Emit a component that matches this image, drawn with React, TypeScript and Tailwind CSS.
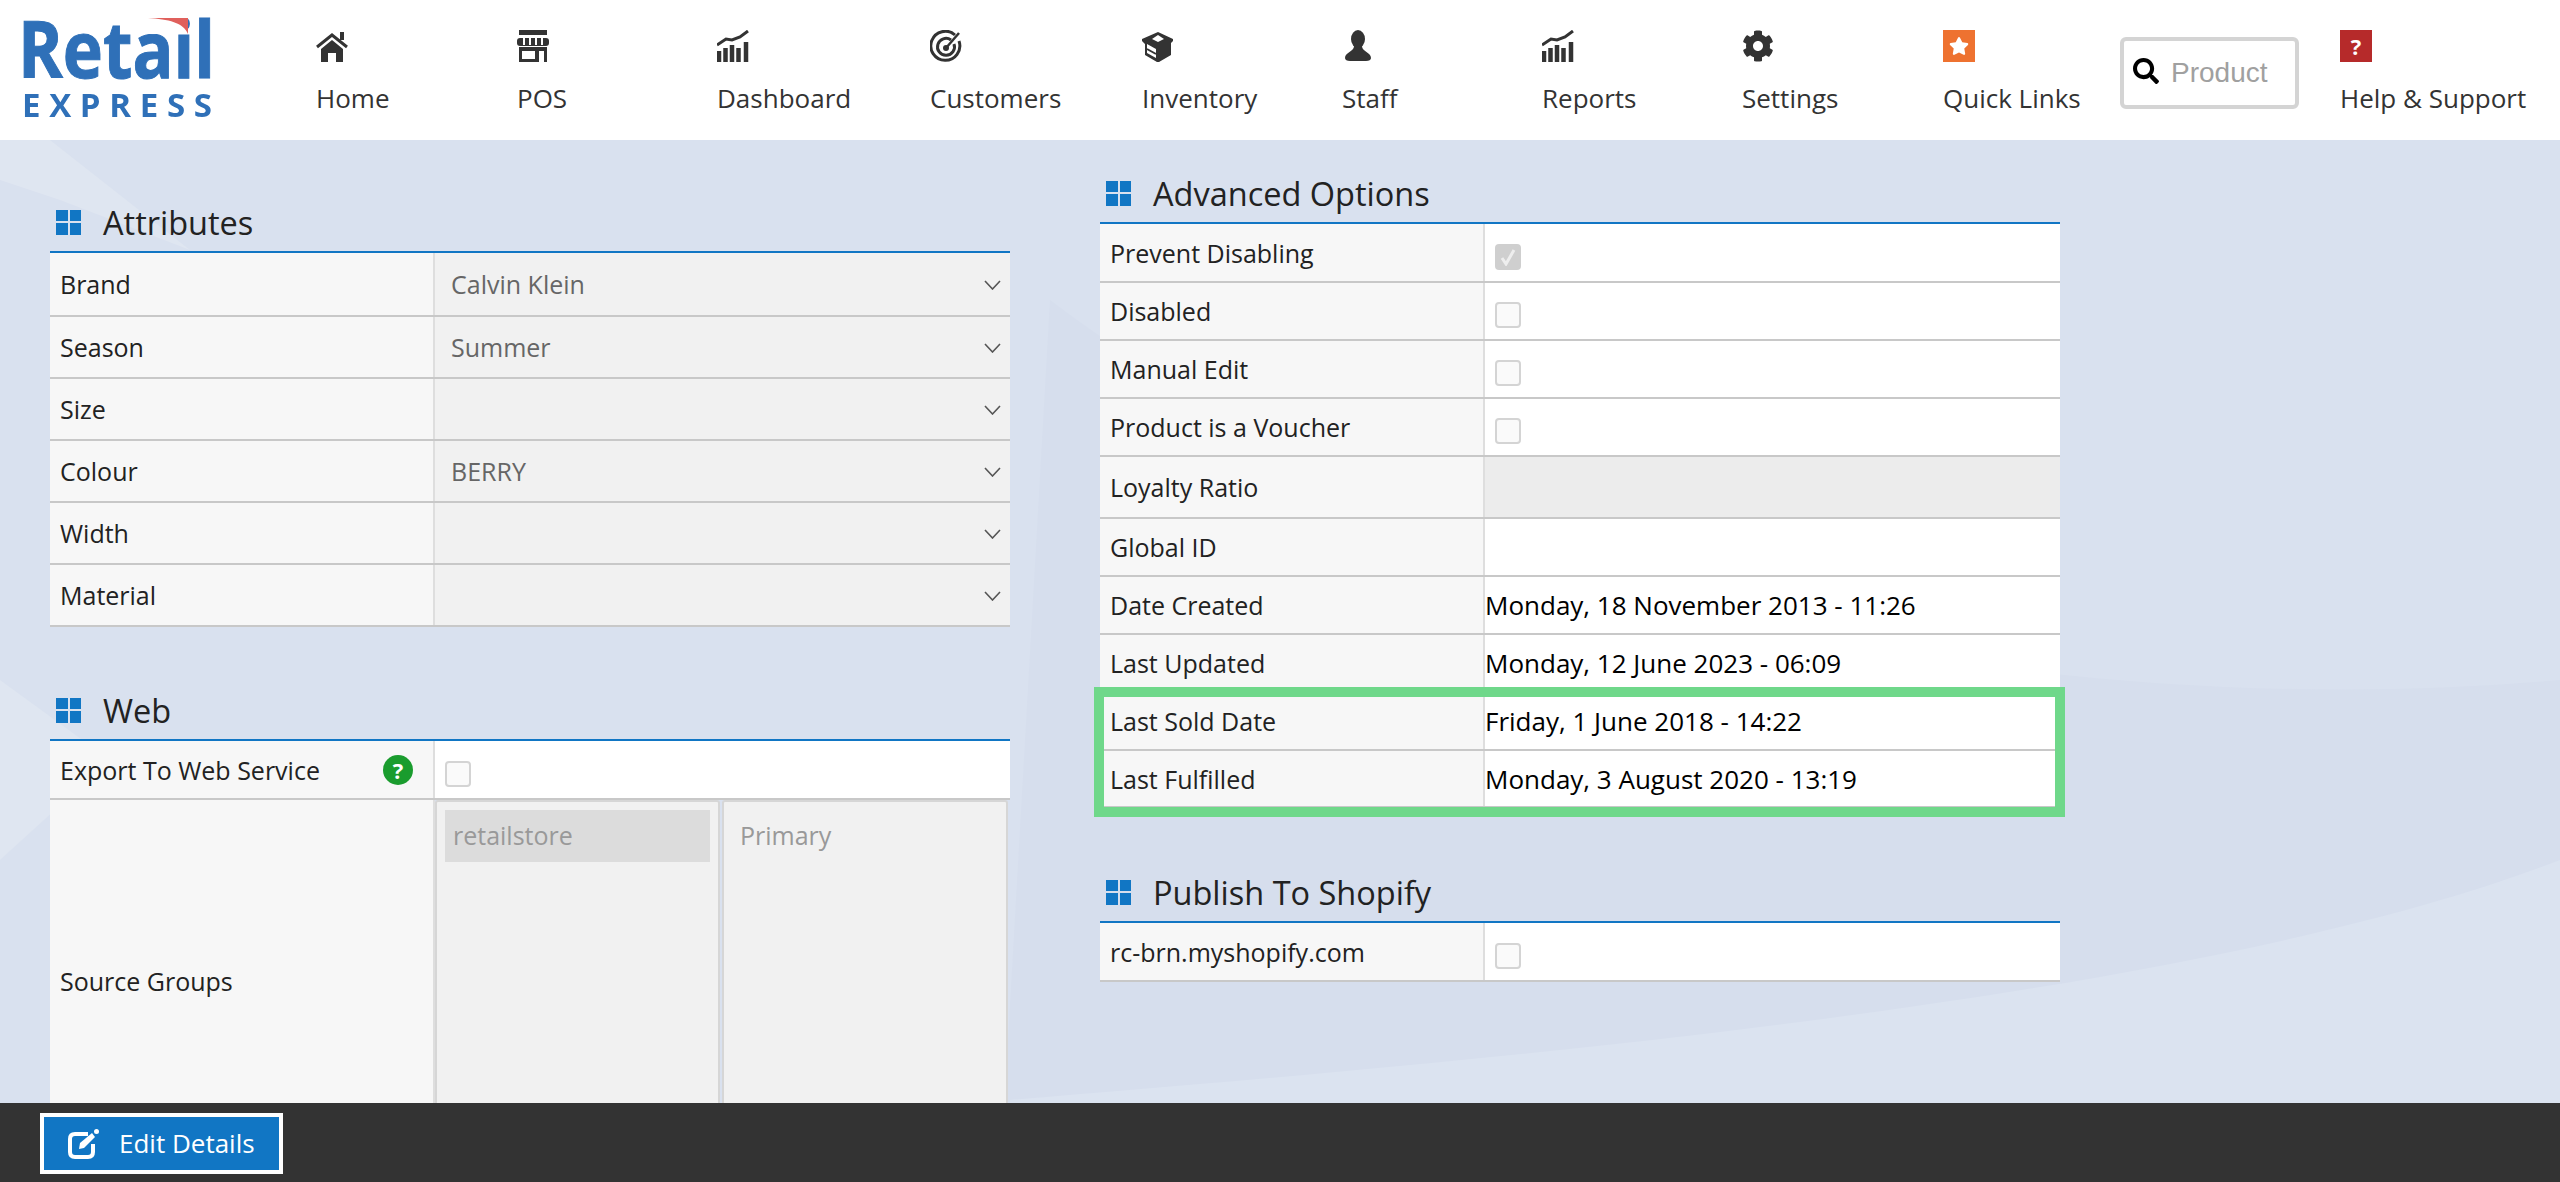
import React from "react";
import { FaCog, FaSearch, FaStar } from "react-icons/fa";

const D = "#333333";

function HomeIcon() {
  return (
    <svg width="32" height="32" viewBox="0 0 32 32">
      <path d="M1 17 L16 5 L31 17" fill="none" stroke={D} strokeWidth="3" />
      <rect x="24" y="2" width="4" height="8" fill={D} />
      <path d="M5 19 L16 10 L27 19 V32 H20 V23 H12 V32 H5 Z" fill={D} />
    </svg>
  );
}
function PosIcon() {
  return (
    <svg width="32" height="32" viewBox="0 0 32 32">
      <rect x="2" y="0" width="28" height="5" fill={D} />
      <rect x="0" y="8" width="32" height="8" rx="3" fill={D} />
      <path d="M7 8V15M13 8V15M19 8V15M25 8V15" stroke="#fff" strokeWidth="2" />
      <path d="M2 17H30V32H2Z" fill={D} />
      <rect x="5" y="21" width="13" height="8" fill="#fff" />
      <rect x="22" y="21" width="5" height="11" fill="#fff" />
    </svg>
  );
}
function ChartIcon() {
  return (
    <svg width="32" height="32" viewBox="0 0 32 32">
      <path d="M0 15 L9 9 L15 10 L23 7 L31 1" fill="none" stroke={D} strokeWidth="3" />
      <path d="M2 21V32M8.5 18V32M15 15V32M21.5 18V32M29 12V32" stroke={D} strokeWidth="4.5" />
    </svg>
  );
}
function TargetIcon() {
  return (
    <svg width="32" height="32" viewBox="0 0 32 32" fill="none">
      <path d="M25 5 A14.5 14.5 0 1 0 29 11" stroke={D} strokeWidth="3" />
      <path d="M21 10 A8.5 8.5 0 1 0 24 14" stroke={D} strokeWidth="3" />
      <circle cx="16" cy="18" r="3" fill={D} />
      <path d="M16 18 L29 3" stroke={D} strokeWidth="2.5" />
    </svg>
  );
}
function BoxIcon() {
  return (
    <svg width="32" height="32" viewBox="0 0 32 32">
      <path d="M16 2 L31 9 V11 L29 13 V25 L17 32 H15 L3 25 V14 L0 11 V9 Z" fill={D} />
      <path d="M16 5 L10 9 L16 12 L22 9 Z" fill="#fff" />
      <path d="M5 14 L14 19 V28 L5 23 Z" fill="#fff" />
      <path d="M5 19 L14 24" stroke={D} strokeWidth="2" />
    </svg>
  );
}
function PersonIcon() {
  return (
    <svg width="32" height="32" viewBox="0 0 32 32">
      <ellipse cx="16" cy="9" rx="7" ry="9" fill={D} />
      <path d="M12 16 H20 C20 22 29 22 29 28 C29 30 27 31 24 31 H8 C5 31 3 30 3 28 C3 22 12 22 12 16Z" fill={D} />
    </svg>
  );
}
function EditIcon() {
  return (
    <svg width="32" height="30" viewBox="0 0 32 30" fill="none">
      <path d="M20 5 H7 Q2 5 2 10 V23 Q2 28 7 28 H20 Q25 28 25 23 V15" stroke="#fff" strokeWidth="4" />
      <path d="M11 20 L12 14 L24 4 L27 8 L16 19 Z" fill="#fff" />
      <circle cx="28.5" cy="2.5" r="2.5" fill="#fff" />
    </svg>
  );
}

const nav: { label: string; w: string; icon: React.ReactNode }[] = [
  { label: "Home", w: "w-[201px]", icon: <HomeIcon /> },
  { label: "POS", w: "w-[200px]", icon: <PosIcon /> },
  { label: "Dashboard", w: "w-[213px]", icon: <ChartIcon /> },
  { label: "Customers", w: "w-[212px]", icon: <TargetIcon /> },
  { label: "Inventory", w: "w-[200px]", icon: <BoxIcon /> },
  { label: "Staff", w: "w-[200px]", icon: <PersonIcon /> },
  { label: "Reports", w: "w-[200px]", icon: <ChartIcon /> },
  { label: "Settings", w: "w-[201px]", icon: <FaCog size={32} color={D} /> },
  {
    label: "Quick Links",
    w: "w-[177px]",
    icon: (
      <div className="flex h-[32px] w-[32px] items-center justify-center bg-[#ee7230]">
        <FaStar size={20} color="#fff" />
      </div>
    ),
  },
];

function NavItem({ label, w, icon }: { label: string; w: string; icon: React.ReactNode }) {
  return (
    <div className={`${w} flex flex-col items-start`}>
      <div className="h-[32px]">{icon}</div>
      <div className="mt-[18px] text-[26px] leading-[36px] text-[#333] whitespace-nowrap">{label}</div>
    </div>
  );
}

function Logo() {
  return (
    <svg width="230" height="130" viewBox="0 0 230 130" className="ml-[18px] mt-[10px] overflow-visible blur-[0.7px]">
      <text x="0" y="68" fontFamily="Open Sans" fontWeight="700" fontSize="78" fill="#2f70b8" stroke="#2f70b8" strokeWidth="1" textLength="197" lengthAdjust="spacingAndGlyphs">Retail</text>
      <rect x="120" y="6" width="50" height="18" fill="#fff" />
      <path d="M130 8 C150 9 166 13 170 24 L170 8 Z" fill="#e0605c" />
      <text x="4" y="107" fontFamily="Open Sans" fontWeight="700" fontSize="33" fill="#2f70b8" textLength="190">EXPRESS</text>
    </svg>
  );
}

function Grid() {
  return (
    <div className="grid h-[25px] w-[25px] grid-cols-2 gap-[2px]">
      <div className="bg-[#1176c4]" />
      <div className="bg-[#1176c4]" />
      <div className="bg-[#1176c4]" />
      <div className="bg-[#1176c4]" />
    </div>
  );
}

function SectionHead({ title, cls = "" }: { title: string; cls?: string }) {
  return (
    <div className={`flex h-[58px] items-center ${cls}`}>
      <div className="ml-[6px] mr-[22px]"><Grid /></div>
      <div className="pt-[1px] text-[32.5px] leading-[44px] text-[#222] whitespace-nowrap">{title}</div>
    </div>
  );
}

function Row({ h, label, children, col, cls = "", extra }: { h: string; label: string; children?: React.ReactNode; col: string; cls?: string; extra?: React.ReactNode }) {
  return (
    <div className={`flex ${h} border-b-2 border-[#c8c8c8]`}>
      <div className={`${col} flex items-center justify-between border-r-2 border-[#dedede] bg-[#f7f7f7] pl-[10px] pr-[20px] text-[25px] text-[#222] whitespace-nowrap`}>
        <span className="pt-[2px]">{label}</span>
        {extra}
      </div>
      <div className={`flex flex-1 items-center ${cls}`}>{children}</div>
    </div>
  );
}

function Chevron() {
  return (
    <svg width="17" height="10" viewBox="0 0 17 10" className="mr-[9px] mt-[2px] shrink-0">
      <path d="M1 1 L8.5 9 L16 1" fill="none" stroke="#555" strokeWidth="1.6" />
    </svg>
  );
}

function SelectRow({ h, label, value }: { h: string; label: string; value?: string }) {
  return (
    <Row h={h} label={label} col="w-[385px]" cls="justify-between bg-[#f1f1f1] pl-[16px] text-[25px] text-[#666]">
      <span className="pt-[2px]">{value}</span>
      <Chevron />
    </Row>
  );
}

function Check({ on }: { on?: boolean }) {
  return on ? (
    <div className="ml-[10px] mt-[8px] flex h-[26px] w-[26px] items-center justify-center rounded-[4px] bg-[#cfcfcf]">
      <svg width="16" height="18" viewBox="0 0 16 18"><path d="M2 10 L6 16 L14 2" fill="none" stroke="#eee" strokeWidth="3" /></svg>
    </div>
  ) : (
    <div className="ml-[10px] mt-[8px] h-[26px] w-[26px] rounded-[4px] border-2 border-[#d4d4d4] bg-[#fafafa]" />
  );
}

function DetailRow({ h, label, date, check, on, cls = "bg-white" }: { h: string; label: string; date?: string; check?: boolean; on?: boolean; cls?: string }) {
  return (
    <Row h={h} label={label} col="w-[385px]" cls={`${cls} text-[26px] text-black`}>
      {date ? <span className="whitespace-nowrap pt-[1px]">{date}</span> : null}
      {check ? <Check on={on} /> : null}
    </Row>
  );
}

export default function App() {
  return (
    <div className="relative h-[1182px] w-full overflow-hidden bg-[#d9e1ef]" style={{ fontFamily: '"Open Sans", sans-serif' }}>
      <svg className="absolute inset-0" width="2560" height="1182" viewBox="0 0 2560 1182">
        <path d="M0 140 H50 L190 250 L60 200 L0 180Z" fill="#dfe6f1" />
        <path d="M0 680 L110 760 L0 860Z" fill="#dfe6f1" />
        <path d="M1050 300 C1500 640 2100 720 2560 680 V1182 H1000 Z" fill="#d6deed" />
        <path d="M1010 1100 C1500 1060 2200 1000 2560 860 V1182 H1010Z" fill="#dbe3f0" />
      </svg>

      <header className="relative flex h-[140px] items-start bg-white pt-[30px]">
        <div className="-mt-[30px] w-[316px]"><Logo /></div>
        {nav.map((n) => <NavItem key={n.label} {...n} />)}
        <div className="mt-[7px] mr-[41px] flex h-[72px] w-[179px] items-start rounded-[6px] border-4 border-[#d4d4d4] bg-white pl-[9px] pt-[11px]">
          <FaSearch size={26} color="#000" className="mt-[6px]" />
          <span className="ml-[12px] mt-[3px] text-[28px] leading-[36px] text-[#a0a0a0]" style={{ fontFamily: '"Liberation Sans", sans-serif' }}>Product</span>
        </div>
        <NavItem
          label="Help & Support"
          w="w-[200px]"
          icon={<div className="flex h-[32px] w-[32px] items-center justify-center bg-[#b62a2a] text-[22px] font-bold leading-none text-white">?</div>}
        />
      </header>

      <main className="relative flex items-start pl-[50px]">
        <div className="w-[960px] pt-[53px]">
          <SectionHead title="Attributes" />
          <div className="border-t-2 border-[#1176c4]">
            <SelectRow h="h-[64px]" label="Brand" value="Calvin Klein" />
            <SelectRow h="h-[62px]" label="Season" value="Summer" />
            <SelectRow h="h-[62px]" label="Size" />
            <SelectRow h="h-[62px]" label="Colour" value="BERRY" />
            <SelectRow h="h-[62px]" label="Width" />
            <SelectRow h="h-[62px]" label="Material" />
          </div>
          <SectionHead title="Web" cls="mt-[54px]" />
          <div className="border-t-2 border-[#1176c4]">
            <Row
              h="h-[59px]"
              label="Export To Web Service"
              col="w-[385px]"
              cls="bg-white"
              extra={
                <div className="flex h-[30px] w-[30px] items-center justify-center rounded-full bg-[#1a9c2e] text-[22px] font-bold leading-none text-white">?</div>
              }
            >
              <Check />
            </Row>
            <div className="flex h-[364px]">
              <div className="flex w-[385px] items-center border-r-2 border-[#dedede] bg-[#f7f7f7] pl-[10px] text-[25px] text-[#222]">Source Groups</div>
              <div className="flex flex-1 gap-[2px] pr-[2px]">
                <div className="w-[285px] rounded-t-[3px] border-2 border-[#d6d6d6] bg-[#f1f1f1] p-[8px]">
                  <div className="flex h-[52px] items-center bg-[#dcdcdc] pl-[8px] text-[25px] text-[#999]">retailstore</div>
                </div>
                <div className="flex-1 rounded-t-[3px] border-2 border-[#d6d6d6] bg-[#f1f1f1] p-[8px]">
                  <div className="flex h-[52px] items-center pl-[8px] text-[25px] text-[#999]">Primary</div>
                </div>
              </div>
            </div>
          </div>
        </div>

        <div className="relative ml-[90px] w-[960px] pt-[24px]">
          <SectionHead title="Advanced Options" />
          <div className="border-t-2 border-[#1176c4]">
            <DetailRow h="h-[59px]" label="Prevent Disabling" check on />
            <DetailRow h="h-[58px]" label="Disabled" check />
            <DetailRow h="h-[58px]" label="Manual Edit" check />
            <DetailRow h="h-[58px]" label="Product is a Voucher" check />
            <DetailRow h="h-[62px]" label="Loyalty Ratio" cls="bg-[#ececec]" />
            <DetailRow h="h-[58px]" label="Global ID" />
            <DetailRow h="h-[58px]" label="Date Created" date="Monday, 18 November 2013 - 11:26" />
            <DetailRow h="h-[58px]" label="Last Updated" date="Monday, 12 June 2023 - 06:09" />
            <DetailRow h="h-[58px]" label="Last Sold Date" date="Friday, 1 June 2018 - 14:22" />
            <DetailRow h="h-[57px]" label="Last Fulfilled" date="Monday, 3 August 2020 - 13:19" />
          </div>
          <SectionHead title="Publish To Shopify" cls="mt-[55px]" />
          <div className="border-t-2 border-[#1176c4]">
            <DetailRow h="h-[59px]" label="rc-brn.myshopify.com" check />
          </div>
          <div className="absolute left-[-6px] top-[547px] h-[130px] w-[971px] border-[10px] border-[#6fd88a]" />
        </div>
      </main>

      <footer className="absolute bottom-0 left-0 right-0 h-[79px] bg-[#333] pl-[40px] pt-[10px]">
        <button className="flex h-[61px] w-[243px] items-center border-4 border-white bg-[#1176c4] pl-[24px] text-[26px] text-white">
          <EditIcon />
          <span className="ml-[19px]">Edit Details</span>
        </button>
      </footer>
    </div>
  );
}
